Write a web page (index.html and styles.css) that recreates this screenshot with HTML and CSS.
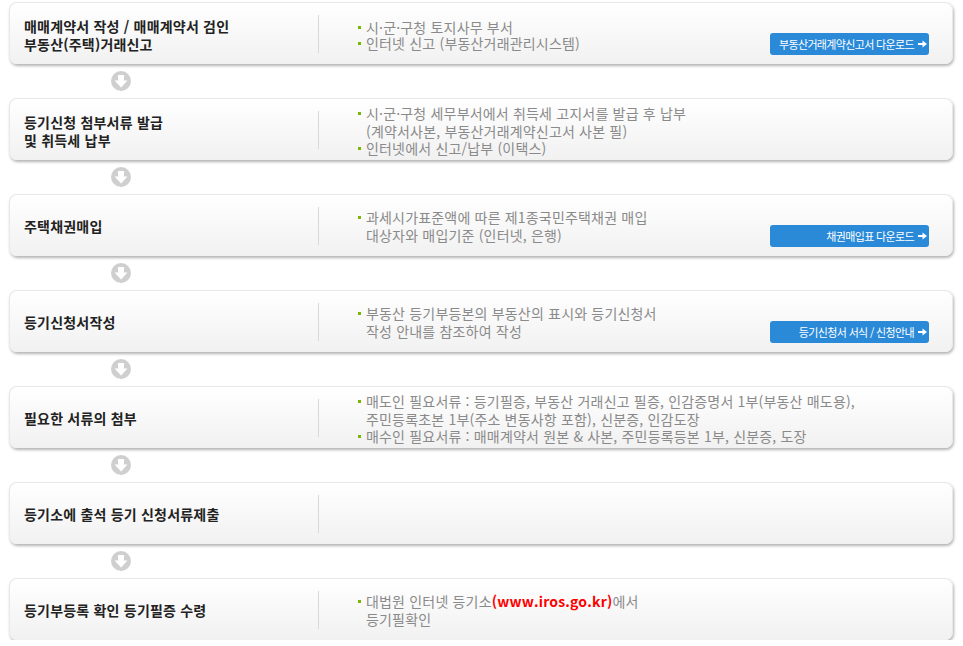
FILE: index.html
```html
<!DOCTYPE html>
<html lang="ko">
<head>
<meta charset="utf-8">
<title>부동산 등기 절차</title>
<link rel="stylesheet" href="styles.css">
</head>
<body>
<svg class="defs" width="0" height="0" aria-hidden="true"><defs>
<symbol id="down" viewBox="0 0 20 20"><circle cx="10" cy="10" r="10" fill="#cfcfcf"/><path d="M7 4h6v5.500h3.500L10 16.500 3.500 9.500H7z" fill="#fff"/></symbol>
<symbol id="right" viewBox="0 0 9 8"><path d="M0 3h4.500V.5L9 4 4.500 7.500V5H0z" fill="#fff"/></symbol>
</defs></svg>
<main class="flow">
  <section class="card">
    <h2 class="title">매매계약서 작성 / 매매계약서 검인<br>부동산(주택)거래신고</h2>
    <div class="body">
      <ul class="list list-tight">
        <li>시·군·구청 토지사무 부서</li>
        <li>인터넷 신고 (부동산거래관리시스템)</li>
      </ul>
      <a class="btn">부동산거래계약신고서 다운로드<svg class="btn-ico"><use href="#right"/></svg></a>
    </div>
  </section>
  <div class="arrow"><svg class="arrow-ico"><use href="#down"/></svg></div>
  <section class="card">
    <h2 class="title">등기신청 첨부서류 발급<br>및 취득세 납부</h2>
    <div class="body">
      <ul class="list list-three">
        <li>시·군·구청 세무부서에서 취득세 고지서를 발급 후 납부<br>(계약서사본, 부동산거래계약신고서 사본 필)</li>
        <li>인터넷에서 신고/납부 (이택스)</li>
      </ul>
    </div>
  </section>
  <div class="arrow"><svg class="arrow-ico"><use href="#down"/></svg></div>
  <section class="card">
    <h2 class="title title-one">주택채권매입</h2>
    <div class="body">
      <ul class="list">
        <li>과세시가표준액에 따른 제1종국민주택채권 매입<br>대상자와 매입기준 (인터넷, 은행)</li>
      </ul>
      <a class="btn">채권매입표 다운로드<svg class="btn-ico"><use href="#right"/></svg></a>
    </div>
  </section>
  <div class="arrow"><svg class="arrow-ico"><use href="#down"/></svg></div>
  <section class="card">
    <h2 class="title title-one">등기신청서작성</h2>
    <div class="body">
      <ul class="list">
        <li>부동산 등기부등본의 부동산의 표시와 등기신청서<br>작성 안내를 참조하여 작성</li>
      </ul>
      <a class="btn">등기신청서 서식 / 신청안내<svg class="btn-ico"><use href="#right"/></svg></a>
    </div>
  </section>
  <div class="arrow"><svg class="arrow-ico"><use href="#down"/></svg></div>
  <section class="card">
    <h2 class="title title-one">필요한 서류의 첨부</h2>
    <div class="body">
      <ul class="list list-three">
        <li>매도인 필요서류 : 등기필증, 부동산 거래신고 필증, 인감증명서 1부(부동산 매도용),<br>주민등록초본 1부(주소 변동사항 포함), 신분증, 인감도장</li>
        <li>매수인 필요서류 : 매매계약서 원본 &amp; 사본, 주민등록등본 1부, 신분증, 도장</li>
      </ul>
    </div>
  </section>
  <div class="arrow"><svg class="arrow-ico"><use href="#down"/></svg></div>
  <section class="card">
    <h2 class="title title-one">등기소에 출석 등기 신청서류제출</h2>
    <div class="body"></div>
  </section>
  <div class="arrow"><svg class="arrow-ico"><use href="#down"/></svg></div>
  <section class="card">
    <h2 class="title title-one">등기부등록 확인 등기필증 수령</h2>
    <div class="body">
      <ul class="list">
        <li>대법원 인터넷 등기소<strong class="link">(www.iros.go.kr)</strong>에서<br>등기필확인</li>
      </ul>
    </div>
  </section>
</main>
</body>
</html>
```
FILE: styles.css
```css
* { box-sizing: border-box; }
html, body { margin: 0; background: #fff; }
body {
  font-family: "Noto Sans CJK KR", "Noto Sans", sans-serif;
  overflow: hidden;
}
.defs { position: absolute; }
.flow {
  width: 944px;
  margin-left: 9px;
  padding-top: 2px;
}
.card {
  height: 62px;
  display: flex;
  align-items: center;
  border: 1px solid #e8e8e8;
  border-bottom: 0;
  border-radius: 8px;
  padding-left: 14px;
  background: linear-gradient(#fff, #f1f1f1);
  box-shadow: 1px 2px 3px #b4b4b4;
}
.title {
  flex: 0 0 294px;
  margin: 0;
  padding-top: 2px;
  font-size: 14px;
  font-weight: 700;
  line-height: 18px;
  color: #222;
  letter-spacing: 0.2px;
}
.title-one { padding-top: 0; }
.body {
  flex: 1;
  height: 38px;
  border-left: 1px solid #d8d8d8;
  position: relative;
  display: flex;
  align-items: center;
  padding-left: 39px;
}
.list {
  list-style: none;
  margin: 2px 0 0;
  padding: 0;
  font-size: 14px;
  line-height: 17.5px;
  color: #8a8a8a;
  letter-spacing: 0.18px;
}
.list-tight { line-height: 16px; }
.list-three { margin-top: 4px; }
.list li { padding-left: 8px; position: relative; }
.list li::before {
  content: "";
  position: absolute;
  left: 0;
  top: 7px;
  width: 3px;
  height: 3px;
  background: #7ab800;
}
.link { color: #f00; font-weight: 700; }
.btn {
  position: absolute;
  left: 451px;
  top: 18px;
  width: 159px;
  height: 22px;
  border-radius: 3px;
  background: #2a8ad8;
  color: #fff;
  font-size: 11px;
  letter-spacing: -0.65px;
  white-space: nowrap;
  line-height: 22px;
  display: flex;
  justify-content: flex-end;
  align-items: center;
  gap: 4px;
  padding-right: 2px;
}
.btn-ico { width: 9px; height: 8px; }
.arrow {
  height: 34px;
  padding-left: 102px;
  display: flex;
  align-items: center;
}
.arrow-ico { width: 20px; height: 20px; }
```
